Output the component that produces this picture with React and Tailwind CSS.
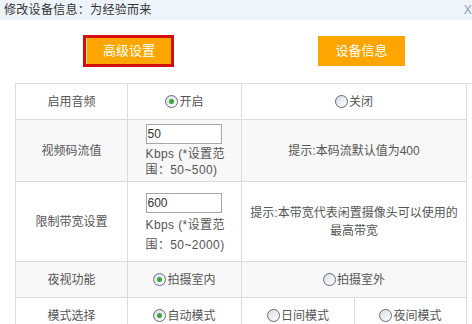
import React from "react";

const font = { fontFamily: '"Liberation Sans", "Noto Sans CJK SC", sans-serif' };

function Radio({ checked }) {
  return (
    <span className="relative inline-flex h-[13px] w-[13px] shrink-0 items-center justify-center rounded-full border border-[#5f6b7a] bg-gradient-to-br from-[#d8dde3] to-[#ffffff]">
      {checked && <span className="h-[5px] w-[5px] rounded-full bg-[#3aa53a]" />}
    </span>
  );
}

function RadioLabel({ checked, children }) {
  return (
    <span className="inline-flex items-center gap-[1px]">
      <Radio checked={checked} />
      <span>{children}</span>
    </span>
  );
}

function Cell({ className = "", children }) {
  return (
    <div className={"flex items-center justify-center border-r border-b border-[#dcdcdc] text-center " + className}>
      {children}
    </div>
  );
}

function KbpsBlock({ value, range, tall }) {
  return (
    <div className="flex w-[78px] flex-col items-start text-left">
      <div className="h-[20px] w-[76px] border border-[#a0a8b2] bg-white pl-[1px] text-[12px] leading-[18px] text-[#333]">
        {value}
      </div>
      <div className={"whitespace-nowrap tracking-[0.4px] " + (tall ? "mt-[2px] leading-[20px]" : "mt-[2px] leading-[16px]")}>Kbps (*设置范</div>
      <div className={"whitespace-nowrap tracking-[0.4px] " + (tall ? "leading-[20px]" : "leading-[16px]")}>围：50~{range})</div>
    </div>
  );
}

export default function App() {
  return (
    <div className="h-[324px] w-[472px] overflow-hidden bg-white text-[12px] text-[#555]" style={font}>
      <div className="flex h-[20px] items-center justify-between bg-[#eef4fb] pl-[4px] text-[12px] tracking-[0.3px] text-[#333]">
        <span>修改设备信息：为经验而来</span>
        <span className="text-[#8a9bb0]">X</span>
      </div>

      <div className="flex items-center pl-[83px] pt-[15px]">
        <div className="flex h-[32px] w-[91px] border-[3px] border-[#d10f0f] bg-[#ffa500]">
          <div className="flex flex-1 items-center justify-center border-l border-[#ffe6b0] text-[13px] text-white">
            高级设置
          </div>
        </div>
        <div className="ml-[144px] flex h-[30px] w-[87px] items-center justify-center bg-[#ffa500] text-[13px] text-white">
          设备信息
        </div>
      </div>

      <div className="ml-[15px] mt-[16px] grid grid-cols-[112px_114px_113px_112px] border-l border-t border-[#dcdcdc]">
        <Cell className="h-[36px]">启用音频</Cell>
        <Cell className="h-[36px]">
          <RadioLabel checked>开启</RadioLabel>
        </Cell>
        <Cell className="col-span-2 h-[36px]">
          <RadioLabel>关闭</RadioLabel>
        </Cell>

        <Cell className="h-[62px] bg-[#f8f8f8]">视频码流值</Cell>
        <Cell className="h-[62px] bg-[#f8f8f8]">
          <KbpsBlock value="50" range="500" />
        </Cell>
        <Cell className="col-span-2 h-[62px] bg-[#f8f8f8]">提示:本码流默认值为400</Cell>

        <Cell className="h-[80px]">限制带宽设置</Cell>
        <Cell className="h-[80px] pt-[4px]">
          <KbpsBlock value="600" range="2000" tall />
        </Cell>
        <Cell className="col-span-2 h-[80px] px-[4px] leading-[18px]">
          <span>
            提示:本带宽代表闲置摄像头可以使用的
            <br />
            最高带宽
          </span>
        </Cell>

        <Cell className="h-[36px] bg-[#f8f8f8]">夜视功能</Cell>
        <Cell className="h-[36px] bg-[#f8f8f8]">
          <RadioLabel checked>拍摄室内</RadioLabel>
        </Cell>
        <Cell className="col-span-2 h-[36px] bg-[#f8f8f8]">
          <RadioLabel>拍摄室外</RadioLabel>
        </Cell>

        <Cell className="h-[36px]">模式选择</Cell>
        <Cell className="h-[36px]">
          <RadioLabel checked>自动模式</RadioLabel>
        </Cell>
        <Cell className="h-[36px]">
          <RadioLabel>日间模式</RadioLabel>
        </Cell>
        <Cell className="h-[36px]">
          <RadioLabel>夜间模式</RadioLabel>
        </Cell>
      </div>
    </div>
  );
}
